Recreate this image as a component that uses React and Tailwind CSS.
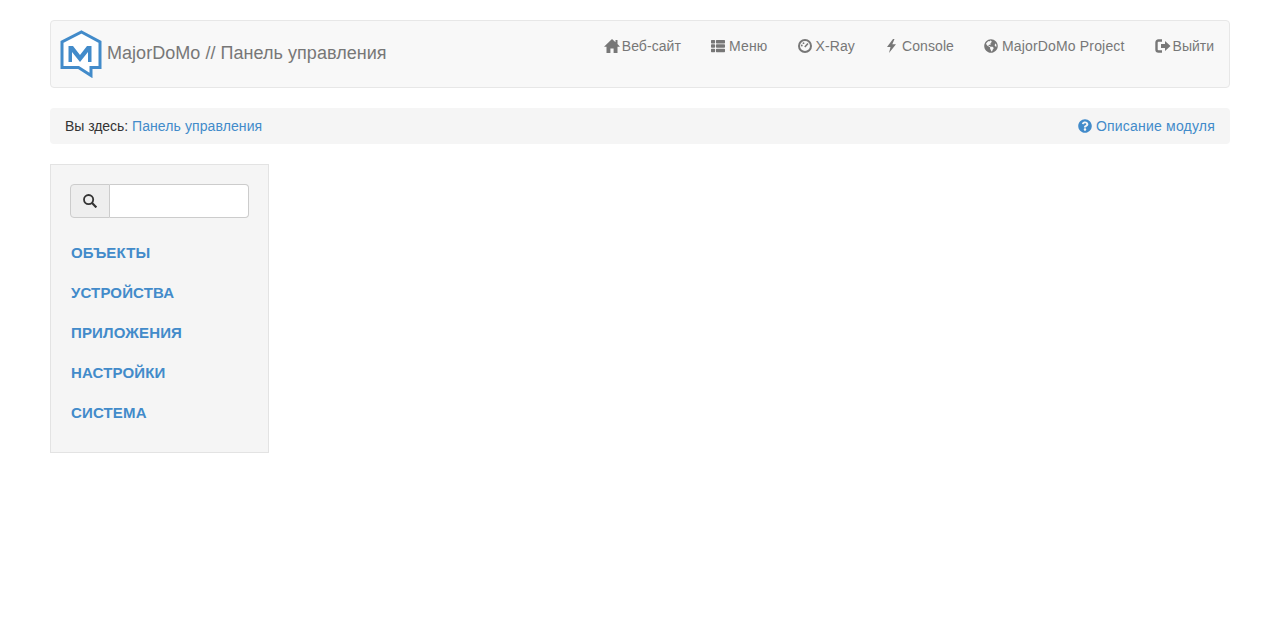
import { FaThList, FaGlobeAmericas, FaQuestionCircle } from 'react-icons/fa'

function Logo() {
  return (
    <svg width="42" height="48" viewBox="0 0 42 48" className="shrink-0">
      <path d="M21.5 2 L40 12 V37.5 H31 V45.5 L18.5 37.5 H2 V12 Z" fill="#fff" stroke="#428bca" strokeWidth="3" strokeLinejoin="miter" />
      <path d="M8.5 32 V16 H13 L20 25 L27 16 H31.5 V32 H28 V22 L20 32 L12 22 V32 Z" fill="#428bca" />
    </svg>
  )
}

function HomeIcon() {
  return (
    <svg width="16" height="14" viewBox="0 0 16 14" className="shrink-0">
      <path d="M8 0 L11.5 3.2 V1 H13.5 V5 L16 7.8 H13.5 V14 H9.6 V9.5 H6.4 V14 H2.5 V7.8 H0 Z" fill="#777" />
    </svg>
  )
}

function DashIcon() {
  return (
    <svg width="14" height="14" viewBox="0 0 14 14" className="shrink-0">
      <circle cx="7" cy="7" r="6" fill="none" stroke="#777" strokeWidth="2" />
      <path d="M6.8 8 L10 4.5" stroke="#777" strokeWidth="1.6" />
      <circle cx="3.8" cy="6.5" r="0.9" fill="#777" />
      <circle cx="5.5" cy="4.2" r="0.9" fill="#777" />
    </svg>
  )
}

function BoltIcon() {
  return (
    <svg width="11" height="14" viewBox="0 0 11 14" className="shrink-0">
      <path d="M8 0 L2 8 H5.5 L4 14 L11 5.2 H7.3 L9.5 0 Z" fill="#777" />
    </svg>
  )
}

function LogoutIcon() {
  return (
    <svg width="16" height="14" viewBox="0 0 16 14" className="shrink-0">
      <path d="M7 1.5 H3.5 Q1.5 1.5 1.5 3.5 V10.5 Q1.5 12.5 3.5 12.5 H7" fill="none" stroke="#777" strokeWidth="2.4" />
      <path d="M6 5 H10 V2 L15.5 7 L10 12 V9 H6 Z" fill="#777" />
    </svg>
  )
}

function SearchIcon() {
  return (
    <svg width="14" height="14" viewBox="0 0 14 14">
      <circle cx="5.6" cy="5.6" r="4.6" fill="none" stroke="#333" strokeWidth="1.8" />
      <path d="M8.8 8.8 L13.4 13.4" stroke="#333" strokeWidth="2.2" />
    </svg>
  )
}

const navItems = [
  { icon: <HomeIcon />, label: 'Веб-сайт', className: 'gap-[2px] tracking-[0.05px]' },
  { icon: <FaThList size={14} />, label: 'Меню', className: 'gap-[4px] tracking-[0.2px]' },
  { icon: <DashIcon />, label: 'X-Ray', className: 'gap-[4px] tracking-[0.1px]' },
  { icon: <BoltIcon />, label: 'Console', className: 'gap-[6px] tracking-[0.1px]' },
  { icon: <FaGlobeAmericas size={14} />, label: 'MajorDoMo Project', className: 'gap-[4px] tracking-[0.16px]' },
  { icon: <LogoutIcon />, label: 'Выйти', className: 'gap-[2px]' },
]

const menuItems = ['Объекты', 'Устройства', 'Приложения', 'Настройки', 'Система']

export default function App() {
  return (
    <div className="min-h-screen bg-white px-[50px] pt-5 text-sm text-[#333] font-['Liberation_Sans',Arial,sans-serif]">
      <nav className="flex h-[68px] items-start justify-between rounded border border-[#e7e7e7] bg-[#f8f8f8]">
        <a className="flex items-center gap-[5px] pl-[9px] pt-[9px] text-lg text-[#777]">
          <Logo />
          <span className="-mt-[2px] tracking-[0.04px]">MajorDoMo // Панель управления</span>
        </a>
        <ul className="flex">
          {navItems.map((item) => (
            <li key={item.label} className={`flex h-[50px] items-center px-[15px] text-[#777] ${item.className}`}>
              {item.icon}
              <span>{item.label}</span>
            </li>
          ))}
        </ul>
      </nav>

      <div className="mt-5 flex h-9 items-center justify-between rounded bg-[#f5f5f5] px-[15px]">
        <div>
          <span className="tracking-[-0.05px]">Вы здесь:</span> <a className="tracking-[0.1px] text-[#428bca]">Панель управления</a>
        </div>
        <a className="flex items-center gap-[4px] tracking-[0.2px] text-[#428bca]">
          <FaQuestionCircle size={14} />
          Описание модуля
        </a>
      </div>

      <div className="mt-5 h-[289px] w-[219px] border border-[#e3e3e3] bg-[#f5f5f5] p-[19px]">
        <div className="flex h-[34px] w-[179px]">
          <span className="flex w-10 items-center justify-center rounded-l border border-[#ccc] bg-[#eee]">
            <SearchIcon />
          </span>
          <input className="min-w-0 flex-1 rounded-r border border-l-0 border-[#ccc] bg-white px-3 outline-none" />
        </div>
        <ul className="mt-[15px] pl-px">
          {menuItems.map((item) => (
            <li key={item} className="flex h-10 items-center text-[15px] font-bold uppercase tracking-[0.15px] text-[#428bca]">
              {item}
            </li>
          ))}
        </ul>
      </div>
    </div>
  )
}
